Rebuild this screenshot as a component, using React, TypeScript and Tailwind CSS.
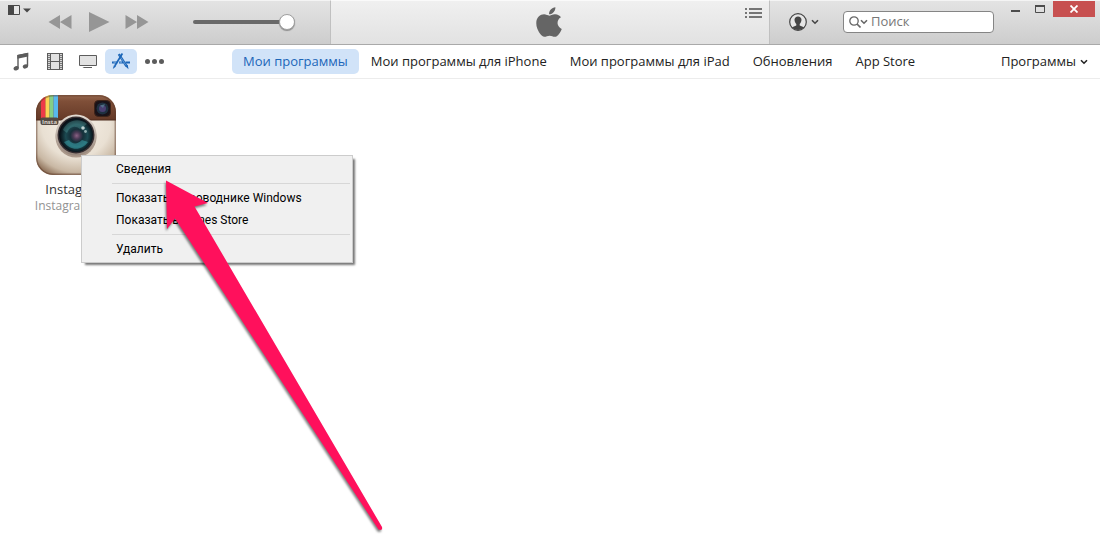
import React from "react";
import { FaApple } from "react-icons/fa";

const Chevron = ({ className = "" }: { className?: string }) => (
  <svg width="8" height="6" viewBox="0 0 8 6" className={className} aria-hidden="true">
    <path d="M1 1.2 4 4.2 7 1.2" fill="none" stroke="currentColor" strokeWidth="1.6" />
  </svg>
);

function Transport() {
  return (
    <div className="flex items-start text-[#969696]">
      <button aria-label="Назад" className="mt-[15px] ml-[17px]">
        <svg width="24" height="14" viewBox="0 0 24 14" className="block">
          <path d="M12 0V14L.5 7ZM23.5 0V14L12 7Z" fill="currentColor" />
        </svg>
      </button>
      <button aria-label="Воспроизвести" className="mt-3 ml-[17px]">
        <svg width="21" height="20" viewBox="0 0 21 20" className="block">
          <path d="M0 0 20.5 10 0 20Z" fill="currentColor" />
        </svg>
      </button>
      <button aria-label="Вперёд" className="mt-[15px] ml-[15px]">
        <svg width="24" height="14" viewBox="0 0 24 14" className="block">
          <path d="M.5 0V14L12 7ZM12 0V14L23.5 7Z" fill="currentColor" />
        </svg>
      </button>
    </div>
  );
}

function Header() {
  return (
    <header className="flex h-[45px] border-b border-[#a9a9a9] bg-linear-to-b from-[#e4e4e4] to-[#cdcdcd]">
      <div className="flex w-[330px] shrink-0 items-start border-t border-[#f4f4f4]">
        <button aria-label="Меню" className="mt-1 ml-2 flex items-center gap-[3px] text-[#484848]">
          <svg width="12" height="10" viewBox="0 0 12 10">
            <path d="M.5 .5H11.5V9.5H.5Z" fill="#e6e6e6" stroke="currentColor" />
            <path d="M0 0H6V10H0Z" fill="currentColor" />
          </svg>
          <svg width="8" height="5" viewBox="0 0 8 5">
            <path d="M0 .5H8L4 4.5Z" fill="currentColor" />
          </svg>
        </button>
        <div className="-mt-1 pt-[3px]">
          <Transport />
        </div>
        <input
          type="range"
          aria-label="Громкость"
          defaultValue={100}
          className="mt-[13px] ml-11 h-4 w-[102px] appearance-none bg-transparent [&::-webkit-slider-runnable-track]:h-1 [&::-webkit-slider-runnable-track]:rounded-full [&::-webkit-slider-runnable-track]:bg-[#696969] [&::-webkit-slider-thumb]:-mt-[6px] [&::-webkit-slider-thumb]:size-4 [&::-webkit-slider-thumb]:appearance-none [&::-webkit-slider-thumb]:rounded-full [&::-webkit-slider-thumb]:border [&::-webkit-slider-thumb]:border-[#a0a0a0] [&::-webkit-slider-thumb]:bg-white [&::-webkit-slider-thumb]:shadow-[0_1px_1px_#8c8c8c]"
        />
      </div>
      <div className="relative flex flex-1 justify-center border-x border-t border-x-[#c0c0c0] border-t-[#fafafa] bg-linear-to-b from-[#f0f0f0] to-[#e2e2e2]">
        <FaApple className="mt-1 mr-[2px] h-[34px] w-[26px] text-[#656565]" preserveAspectRatio="none" aria-label="Apple" />
        <button aria-label="Список воспроизведения" className="absolute top-[7px] right-[7px] text-[#757575]">
          <svg width="17" height="10" viewBox="0 0 17 10" className="block" fill="currentColor">
            <path d="M0 0h2v2H0zM4 0h13v2H4zM0 4h2v2H0zM4 4h13v2H4zM0 8h2v2H0zM4 8h13v2H4z" />
          </svg>
        </button>
      </div>
      <div className="flex w-[330px] shrink-0 items-start border-t border-[#f4f4f4]">
        <button aria-label="Учётная запись" className="mt-3 ml-[19px] flex items-center gap-1 text-[#454545]">
          <svg width="18" height="18" viewBox="0 0 18 18">
            <defs>
              <clipPath id="account-disc">
                <circle cx="9" cy="9" r="8" />
              </clipPath>
            </defs>
            <circle cx="9" cy="9" r="8.3" fill="#e6e6e6" stroke="currentColor" strokeWidth="1.2" />
            <path
              clipPath="url(#account-disc)"
              d="M9 3.5C6.900 3.500 5.500 4.800 5.500 6.700C5.500 8.500 6.500 10 7.300 11V12.500L2.500 14.500V18H15.500V14.500L10.700 12.500V11C11.500 10 12.500 8.500 12.500 6.700C12.500 4.800 11.100 3.500 9 3.500Z"
              fill="currentColor"
            />
          </svg>
          <Chevron />
        </button>
        <label className="mt-[10px] ml-6 flex h-[22px] w-[151px] items-center rounded-[4px] border border-[#858585] bg-white pl-[5px] text-[#666666]">
          <svg width="12" height="12" viewBox="0 0 12 12" className="shrink-0">
            <circle cx="5" cy="5" r="4.2" fill="none" stroke="currentColor" strokeWidth="1.3" />
            <path d="M8 8 11.500 11.500" stroke="currentColor" strokeWidth="1.6" />
          </svg>
          <Chevron className="-ml-px shrink-0" />
          <input
            type="text"
            aria-label="Поиск"
            placeholder="Поиск"
            className="ml-[3px] w-full min-w-0 bg-transparent text-[13px] outline-none placeholder:text-[#777777]"
          />
        </label>
        <div className="ml-auto flex items-start text-[#4c4c4c]">
          <button aria-label="Свернуть" className="mt-[9px] mr-[15px]">
            <svg width="9" height="2" className="block">
              <path d="M0 0H9V2H0Z" fill="currentColor" />
            </svg>
          </button>
          <button aria-label="Развернуть" className="mt-1 mr-2">
            <svg width="10" height="8" className="block">
              <path d="M.5 1H9.500V7.500H.5Z" fill="none" stroke="currentColor" />
              <path d="M0 0H10V2H0Z" fill="currentColor" />
            </svg>
          </button>
          <button aria-label="Закрыть" className="mr-[5px] flex h-4 w-[42px] items-center justify-center bg-[#c75050]">
            <svg width="8" height="8" viewBox="0 0 8 8">
              <path d="M.5 .5 7.500 7.500M7.500 .5 .5 7.500" stroke="#fff" strokeWidth="1.800" />
            </svg>
          </button>
        </div>
      </div>
    </header>
  );
}

function MediaIcons() {
  return (
    <div className="flex items-center text-[#5c5c5c]">
      <button aria-label="Музыка" className="ml-[13px]">
        <svg width="16" height="20" viewBox="0 0 16 20" className="block">
          <path d="M5 16V3.500L14.500 1.500V14" fill="none" stroke="currentColor" strokeWidth="1.400" />
          <path d="M4.300 3 15.200 .8V4.500L4.300 6.700Z" fill="currentColor" />
          <ellipse cx="3.200" cy="16.300" rx="2.700" ry="2.100" transform="rotate(-20 3.200 16.300)" fill="currentColor" />
          <ellipse cx="12.400" cy="14.400" rx="2.700" ry="2.100" transform="rotate(-20 12.400 14.400)" fill="currentColor" />
        </svg>
      </button>
      <button aria-label="Фильмы" className="ml-[18px]">
        <svg width="16" height="17" viewBox="0 0 16 17" className="block">
          <path d="M0 0H16V17H0Z" fill="currentColor" />
          <path d="M4 1H12V8H4ZM4 9H12V16H4Z" fill="#e2e2e2" />
          <path d="M2 1V16M14 1V16" stroke="#fff" strokeWidth="1.500" strokeDasharray="1.200 .8" />
        </svg>
      </button>
      <button aria-label="Телешоу" className="ml-4">
        <svg width="18" height="13" viewBox="0 0 18 13" className="block">
          <path d="M.5 .5H17.500V10.500H.5Z" fill="#e2e2e2" stroke="currentColor" />
          <path d="M5 12H13V13H3.500Z" fill="currentColor" />
        </svg>
      </button>
      <button aria-label="Программы" className="ml-2 flex h-[25px] w-8 items-center justify-center rounded-[5px] bg-[#d1e3f8] text-[#1c66b8]">
        <svg width="20" height="18" viewBox="0 0 20 18" fill="none" stroke="currentColor">
          <path d="M7.800 1.200 15.400 13" strokeWidth="2.400" />
          <path d="M8.600 2.600 14.800 12.200" stroke="#7daee0" strokeWidth=".7" />
          <path d="M14.300 13.200 17.500 16.200 16.800 11.800Z" fill="currentColor" stroke="none" />
          <path d="M11.400 .5 3.900 12.800" strokeWidth="1.700" />
          <path d="M3 12 1.800 16 5 13.400Z" fill="currentColor" stroke="none" />
          <path d="M1 9.500H6.300M8 9.500H12M14.500 9.500H19" strokeWidth="2" />
          <path d="M2.500 9.500H5M8.500 9.500H11" stroke="#7daee0" strokeWidth=".7" />
        </svg>
      </button>
      <button aria-label="Ещё" className="ml-2">
        <svg width="19" height="5" viewBox="0 0 19 5" fill="currentColor" className="block">
          <circle cx="2.500" cy="2.500" r="2.500" />
          <circle cx="9.500" cy="2.500" r="2.500" />
          <circle cx="16.500" cy="2.500" r="2.500" />
        </svg>
      </button>
    </div>
  );
}

const tabs = ["Мои программы для iPhone", "Мои программы для iPad", "Обновления", "App Store"];

function NavBar() {
  return (
    <nav className="flex h-[34px] items-center border-b border-[#ececec] text-[13px] text-[#222222]">
      <MediaIcons />
      <div className="ml-[68px] flex items-center gap-[23px] whitespace-nowrap">
        <a href="#my" aria-current="page" className="-mr-[11px] flex h-[25px] items-center rounded-[5px] bg-[#d1e3f8] px-[11px] text-[#1c66b8]">
          Мои программы
        </a>
        {tabs.map((t) => (
          <a key={t} href="#tab">
            {t}
          </a>
        ))}
      </div>
      <button className="mr-3 ml-auto flex items-center gap-1">
        Программы
        <Chevron />
      </button>
    </nav>
  );
}

function InstagramIcon() {
  return (
    <svg width="80" height="80" viewBox="0 0 80 80" className="block" role="img" aria-label="Instagram">
      <defs>
        <clipPath id="ig-shape">
          <rect width="80" height="80" rx="17" />
        </clipPath>
        <linearGradient id="ig-leather" x1="0" y1="0" x2="0" y2="1">
          <stop offset="0" stopColor="#94664d" />
          <stop offset=".25" stopColor="#7f4f38" />
          <stop offset="1" stopColor="#653927" />
        </linearGradient>
        <radialGradient id="ig-body" cx=".5" cy=".35" r=".72">
          <stop offset="0" stopColor="#f7f0e6" />
          <stop offset=".6" stopColor="#e9e0d3" />
          <stop offset=".85" stopColor="#c9b8a4" />
          <stop offset="1" stopColor="#8e7159" />
        </radialGradient>
        <linearGradient id="ig-ring" x1="0" y1="0" x2="0" y2="1">
          <stop offset="0" stopColor="#e4dcd3" />
          <stop offset="1" stopColor="#96857a" />
        </linearGradient>
        <radialGradient id="ig-glass" cx=".52" cy=".52" r=".5">
          <stop offset="0" stopColor="#8a6284" />
          <stop offset=".2" stopColor="#4a3a55" />
          <stop offset=".38" stopColor="#16303a" />
          <stop offset=".65" stopColor="#1c4a52" />
          <stop offset=".85" stopColor="#10282f" />
          <stop offset="1" stopColor="#080f16" />
        </radialGradient>
      </defs>
      <g clipPath="url(#ig-shape)">
        <rect width="80" height="80" fill="url(#ig-body)" />
        <rect width="80" height="25" fill="url(#ig-leather)" />
        <path d="M0 25H80" stroke="#4c2a1d" />
        <path d="M5 0H9.500V24H5Z" fill="#ee3a48" />
        <path d="M9.500 0H13.500V24H9.500Z" fill="#fbd455" />
        <path d="M13.500 0H17.500V24H13.500Z" fill="#84cf86" />
        <path d="M17.500 0H22V24H17.500Z" fill="#58b8ee" />
        <rect x=".7" y=".7" width="78.600" height="78.600" rx="16.500" fill="none" stroke="#5a3827" strokeOpacity=".45" strokeWidth="1.500" />
      </g>
      <rect x="4.500" y="22.500" width="18" height="7.500" rx="2" fill="#554a44" />
      <text x="13.500" y="28.500" textAnchor="middle" fontSize="6" fontWeight="700" fill="#d8d0c8">
        Insta
      </text>
      <rect x="58.500" y="5.500" width="16" height="16" rx="4" fill="#1a1218" stroke="#3d2318" />
      <circle cx="66.500" cy="13.500" r="6" fill="#1f3040" />
      <circle cx="66.500" cy="13.500" r="3.500" fill="#4a3f72" />
      <path d="M64 10.500 69 9 67 13Z" fill="#5b8f9b" opacity=".6" />
      <circle cx="40" cy="42" r="20.500" fill="#6d5241" opacity=".5" />
      <circle cx="40" cy="40" r="20.500" fill="url(#ig-ring)" />
      <circle cx="40" cy="40" r="18.500" fill="#352d30" />
      <circle cx="40" cy="40" r="17" fill="url(#ig-glass)" />
      <path d="M27 35C31 25 43 22 51 29L44 34C39 30 34 31 31 38Z" fill="#69b6b3" opacity=".28" />
      <path d="M28 47C34 56 46 56 52 47L46 45C41 50 36 49 33 45Z" fill="#42b9c0" opacity=".45" />
      <circle cx="47" cy="33" r="1.800" fill="#d9e9e6" opacity=".85" />
      <circle cx="49.500" cy="36.500" r="1.400" fill="#c6dddb" opacity=".7" />
    </svg>
  );
}

function MenuItem({ children }: { children: React.ReactNode }) {
  return (
    <button role="menuitem" className="block h-[22px] w-full pl-8 text-left whitespace-nowrap">
      {children}
    </button>
  );
}

const Separator = () => <div role="separator" className="my-[3px] ml-7 h-px bg-[#d7d7d7]" />;

function ContextMenu() {
  return (
    <div
      role="menu"
      className="absolute top-[77px] left-[81px] w-[272px] border border-[#cccccc] bg-[#f0f0f0] p-[2px] font-[Roboto,'Open_Sans',sans-serif] text-[12px] text-black shadow-[3px_3px_2px_-1px_#777777]"
    >
      <MenuItem>Сведения</MenuItem>
      <Separator />
      <MenuItem>Показать в проводнике Windows</MenuItem>
      <MenuItem>Показать в iTunes Store</MenuItem>
      <Separator />
      <MenuItem>Удалить</MenuItem>
    </div>
  );
}

export default function App() {
  return (
    <div className="flex min-h-screen flex-col overflow-hidden bg-white font-['Open_Sans','Noto_Sans',sans-serif]">
      <Header />
      <NavBar />
      <main className="relative -mt-px flex-1">
        <figure className="ml-7 flex w-24 flex-col items-center pt-[17px]">
          <InstagramIcon />
          <figcaption className="mt-[5px] text-center">
            <div className="text-[13px] leading-[18px] text-[#333333]">Instagram</div>
            <div className="text-[12px] leading-4 whitespace-nowrap text-[#929292]">Instagram, Inc.</div>
          </figcaption>
        </figure>
        <ContextMenu />
        <svg width="240" height="370" viewBox="160 170 240 370" className="pointer-events-none absolute top-[93px] left-[160px] drop-shadow-[-1px_2px_1px_#00000080]" aria-hidden="true">
          <path d="M166 179.500 208 202 194.500 205.500 382 526Q383 530 378.500 528.500L175 217.500 167 228Z" fill="#ff105c" />
        </svg>
      </main>
    </div>
  );
}
